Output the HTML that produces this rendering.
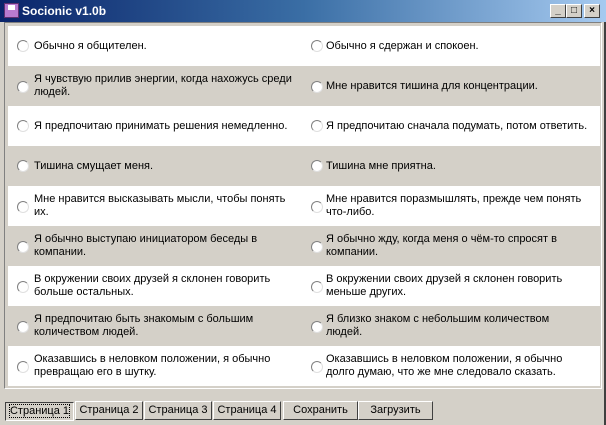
<!DOCTYPE html><html><head><meta charset="utf-8"><style>
*{margin:0;padding:0;box-sizing:border-box}
body{width:606px;height:425px;overflow:hidden;background:#d4d0c8;font-family:"Liberation Sans","DejaVu Sans",sans-serif;font-size:11px;color:#000;position:relative}
.tb{position:absolute;left:0;top:0;width:606px;height:22px;background:linear-gradient(90deg,#0a246a,#3a6ea5 50%,#a6caf0);color:#fff;font-weight:bold;font-size:12px}
.tb span{position:absolute;left:22px;top:4px}
.ic{position:absolute;left:4px;top:3px;width:15px;height:15px;background:#b87bd0;border:1px solid #603070}
.ic:after{content:"";position:absolute;left:3px;top:1px;width:7px;height:5px;background:#fff}
.wb{position:absolute;top:4px;width:16px;height:14px;background:#d4d0c8;border:1px solid;border-color:#fff #404040 #404040 #fff;color:#000;font-size:10px;text-align:center;line-height:12px;font-weight:bold}
.panel{position:absolute;left:4px;top:22px;width:598px;height:367px;border:1px solid;border-color:#808080 #fff #fff #808080}
.row{position:absolute;left:3px;width:592px;height:40px}
.w{background:#fff}
.c{position:absolute;top:0;height:40px;display:flex;align-items:center;line-height:13px}
.r{position:absolute;width:12px;height:12px;border-radius:50%;background:#fff;border:1px solid;border-color:#808080 #e0e0e0 #e0e0e0 #808080}
.btn{position:absolute;height:19px;background:#d4d0c8;border:1px solid;border-color:#fff #404040 #404040 #fff;text-align:center;line-height:16px;font-size:11px}
.win{position:absolute;right:0;top:22px;width:4px;height:403px;border-right:2px solid #404040}
</style></head><body>
<div class="tb"><div class="ic"></div><span>Socionic v1.0b</span>
<div class="wb" style="left:550px">_</div><div class="wb" style="left:566px">□</div><div class="wb" style="left:584px">×</div></div>
<div class="panel">
<div class="row w" style="top:3px"><div class="r" style="left:9px;top:14px"></div><div class="c" style="left:26px">Обычно я общителен.</div><div class="r" style="left:303px;top:14px"></div><div class="c" style="left:318px">Обычно я сдержан и спокоен.</div></div>
<div class="row" style="top:43px"><div class="r" style="left:9px;top:15px"></div><div class="c" style="left:26px;width:270px">Я чувствую прилив энергии, когда нахожусь среди людей.</div><div class="r" style="left:303px;top:15px"></div><div class="c" style="left:318px">Мне нравится тишина для концентрации.</div></div>
<div class="row w" style="top:83px"><div class="r" style="left:9px;top:14px"></div><div class="c" style="left:26px">Я предпочитаю принимать решения немедленно.</div><div class="r" style="left:303px;top:14px"></div><div class="c" style="left:318px">Я предпочитаю сначала подумать, потом ответить.</div></div>
<div class="row" style="top:123px"><div class="r" style="left:9px;top:14px"></div><div class="c" style="left:26px">Тишина смущает меня.</div><div class="r" style="left:303px;top:14px"></div><div class="c" style="left:318px">Тишина мне приятна.</div></div>
<div class="row w" style="top:163px"><div class="r" style="left:9px;top:15px"></div><div class="c" style="left:26px;width:260px">Мне нравится высказывать мысли, чтобы понять их.</div><div class="r" style="left:303px;top:15px"></div><div class="c" style="left:318px;width:270px">Мне нравится поразмышлять, прежде чем понять что-либо.</div></div>
<div class="row" style="top:203px"><div class="r" style="left:9px;top:15px"></div><div class="c" style="left:26px;width:240px">Я обычно выступаю инициатором беседы в компании.</div><div class="r" style="left:303px;top:15px"></div><div class="c" style="left:318px;width:250px">Я обычно жду, когда меня о чём-то спросят в компании.</div></div>
<div class="row w" style="top:243px"><div class="r" style="left:9px;top:15px"></div><div class="c" style="left:26px;width:250px">В окружении своих друзей я склонен говорить больше остальных.</div><div class="r" style="left:303px;top:15px"></div><div class="c" style="left:318px;width:250px">В окружении своих друзей я склонен говорить меньше других.</div></div>
<div class="row" style="top:283px"><div class="r" style="left:9px;top:15px"></div><div class="c" style="left:26px;width:240px">Я предпочитаю быть знакомым с большим количеством людей.</div><div class="r" style="left:303px;top:15px"></div><div class="c" style="left:318px;width:250px">Я близко знаком с небольшим количеством людей.</div></div>
<div class="row w" style="top:323px"><div class="r" style="left:9px;top:15px"></div><div class="c" style="left:26px;width:250px">Оказавшись в неловком положении, я обычно превращаю его в шутку.</div><div class="r" style="left:303px;top:15px"></div><div class="c" style="left:318px;width:255px">Оказавшись в неловком положении, я обычно долго думаю, что же мне следовало сказать.</div></div>
</div>
<div class="btn" style="left:5px;top:402px;width:69px;border-color:#404040 #fff #fff #404040"><span style="outline:1px dotted #000">Страница 1</span></div>
<div class="btn" style="left:75px;top:401px;width:68px">Страница 2</div>
<div class="btn" style="left:144px;top:401px;width:68px">Страница 3</div>
<div class="btn" style="left:213px;top:401px;width:68px">Страница 4</div>
<div class="btn" style="left:283px;top:401px;width:75px">Сохранить</div>
<div class="btn" style="left:358px;top:401px;width:75px">Загрузить</div>
<div class="win"></div>
</body></html>
